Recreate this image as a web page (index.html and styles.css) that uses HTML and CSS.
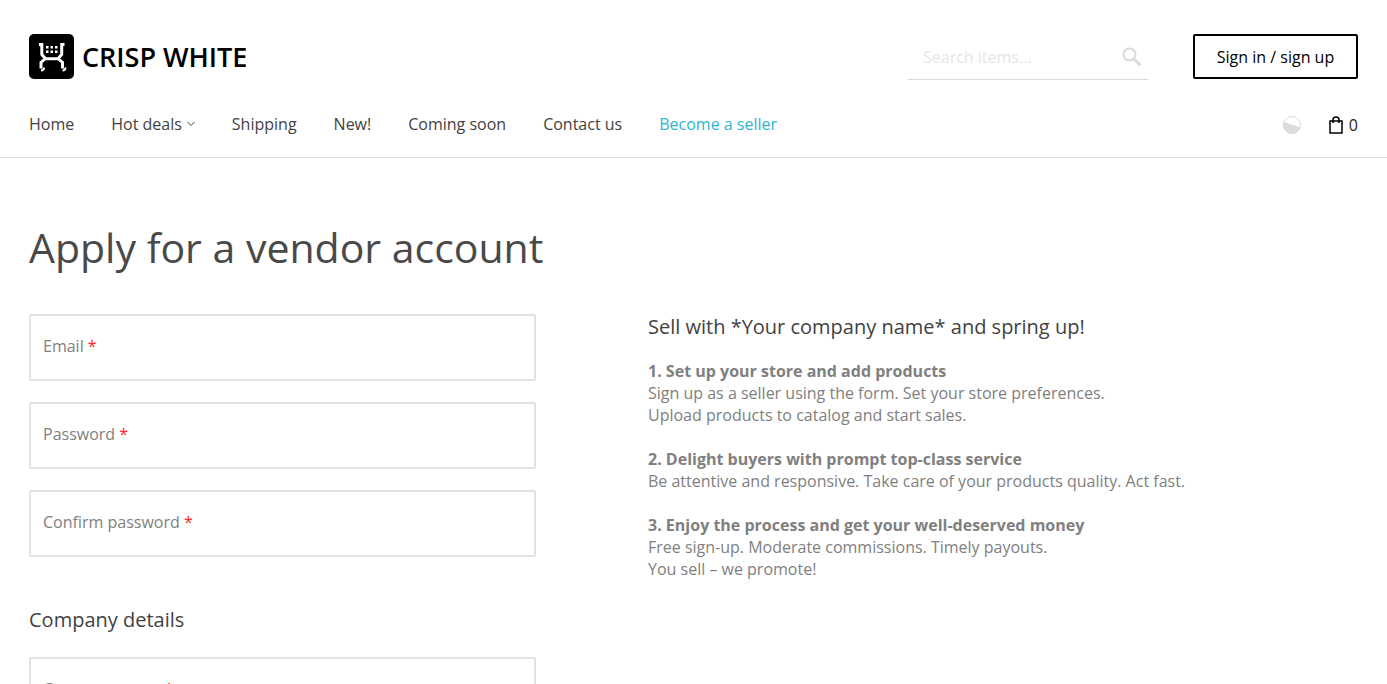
FILE: index.html
```html
<!DOCTYPE html>
<html lang="en">
<head>
<meta charset="utf-8">
<meta name="viewport" content="width=device-width, initial-scale=1">
<title>Apply for a vendor account</title>
<link rel="stylesheet" href="styles.css">
</head>
<body>
<header class="header">
  <div class="header-top">
    <a class="logo" href="#">
      <svg class="logo-mark" viewBox="0 0 45 45" aria-hidden="true">
        <rect width="45" height="45" rx="5"/>
        <path class="logo-frame" d="M10 10.500H12.800V20.500L16.500 24.800H29L32.700 20.500V10.500H35.500M16.500 24.500L12 28.500V34.500M29 24.500L33.500 28.500V34.500"/>
        <path class="logo-basket" d="M17 12h2.500v2.500H17zM21.500 12H24v2.500h-2.500zM26 12h2.500v2.500H26zM17 16.500h2.500V19H17zM21.500 16.500H24V19h-2.500zM26 16.500h2.500V19H26z"/>
        <path class="logo-wheel" d="M12 36.500q3 0 3-3M33.500 36.500q3 0 3-3"/>
      </svg>
      <span>CRISP WHITE</span>
    </a>
    <form class="search">
      <input class="search-input" type="search" placeholder="Search items..." aria-label="Search items">
      <button class="search-button" type="button" aria-label="Search">
        <svg class="search-icon" viewBox="0 0 20 20" aria-hidden="true"><circle cx="7.500" cy="7.500" r="5.900"/><path d="M11.800 11.800l6.500 6.500"/></svg>
      </button>
    </form>
    <button class="sign-in" type="button">Sign in / sign up</button>
  </div>
  <div class="header-bottom">
    <nav class="nav">
      <a href="#">Home</a>
      <a class="has-menu" href="#">Hot deals
        <svg class="chevron" viewBox="0 0 8 6" aria-hidden="true"><path d="M.5 1L4 4.500 7.500 1"/></svg>
      </a>
      <a href="#">Shipping</a>
      <a href="#">New!</a>
      <a href="#">Coming soon</a>
      <a href="#">Contact us</a>
      <a class="active" href="#">Become a seller</a>
    </nav>
    <div class="tools">
      <a href="#" class="compare" aria-label="Compare">
        <svg class="compare-icon" viewBox="0 0 20 20" aria-hidden="true"><circle cx="10" cy="10" r="8.500"/><path d="M1.300 6.800L18.700 12.600A9 9 0 1 1 1.300 6.800z"/></svg>
      </a>
      <a href="#" class="cart">
        <svg class="bag-icon" viewBox="0 0 14 18" aria-hidden="true"><path d="M1 5h12v12H1zM4 7V4a3 3 0 0 1 6 0v3"/></svg>
        <span>0</span>
      </a>
    </div>
  </div>
</header>
<main class="main">
  <h1 class="title">Apply for a vendor account</h1>
  <div class="columns">
    <form class="form">
      <div class="fields">
        <div class="field"><label for="email">Email <span class="required">*</span></label><input id="email" type="email" required></div>
        <div class="field"><label for="password">Password <span class="required">*</span></label><input id="password" type="password" required></div>
        <div class="field"><label for="confirm">Confirm password <span class="required">*</span></label><input id="confirm" type="password" required></div>
      </div>
      <h2 class="subtitle form-subtitle">Company details</h2>
      <div class="fields">
        <div class="field"><label for="company">Company name <span class="required">*</span></label><input id="company" type="text" required></div>
      </div>
    </form>
    <section class="promo">
      <h2 class="subtitle">Sell with *Your company name* and spring up!</h2>
      <p><strong>1. Set up your store and add products</strong><br>Sign up as a seller using the form. Set your store preferences.<br>Upload products to catalog and start sales.</p>
      <p><strong>2. Delight buyers with prompt top-class service</strong><br>Be attentive and responsive. Take care of your products quality. Act fast.</p>
      <p><strong>3. Enjoy the process and get your well-deserved money</strong><br>Free sign-up. Moderate commissions. Timely payouts.<br>You sell – we promote!</p>
    </section>
  </div>
</main>
</body>
</html>
```
FILE: styles.css
```css
* { box-sizing: border-box; }
html { overflow: hidden; }
body {
  margin: 0;
  background: #fff;
  color: #808080;
  font: 16px/22px "Open Sans", sans-serif;
}
a { color: inherit; text-decoration: none; }
button, input { font: inherit; }
svg { display: block; fill: none; }

.header { border-bottom: 1px solid #dfdfdf; padding: 34px 29px 21px; }
.header-top { display: flex; align-items: flex-start; }
.logo {
  display: flex;
  align-items: center;
  gap: 8px;
  margin-right: auto;
  color: #000;
  font-size: 27px;
  font-weight: 600;
}
.logo-mark { width: 45px; height: 45px; }
.logo-mark rect { fill: #000; }
.logo-frame { stroke: #fff; stroke-width: 3; }
.logo-basket { fill: #fff; }
.logo-wheel { stroke: #fff; stroke-width: 2; }

.search {
  display: flex;
  align-items: center;
  width: 240px;
  height: 46px;
  margin-right: 45px;
  border-bottom: 1px solid #d9d9d9;
}
.search-input {
  flex: 1;
  min-width: 0;
  padding: 0 15px;
  border: 0;
  outline: 0;
  background: none;
}
.search-input::placeholder { color: #e6e6e6; }
.search-button { padding: 0 6px; border: 0; background: none; }
.search-icon { width: 20px; height: 20px; stroke: #d9d9d9; stroke-width: 2; }
.search-icon path { stroke-width: 3; }
.sign-in {
  width: 165px;
  height: 45px;
  padding: 0;
  border: 2px solid #000;
  border-radius: 2px;
  background: #fff;
  color: #000;
}

.header-bottom { display: flex; align-items: flex-start; justify-content: space-between; margin-top: 33px; color: #424242; }
.nav { display: flex; gap: 37px; }
.active { color: #2fb5d2; }
.has-menu { display: flex; align-items: center; gap: 5px; }
.chevron { width: 8px; height: 6px; stroke: #424242; }
.tools { display: flex; align-items: center; gap: 27px; padding-top: 1px; }
.compare-icon { width: 20px; height: 20px; }
.compare-icon circle { stroke: #dcdcdc; }
.compare-icon path { fill: #dcdcdc; }
.cart { display: flex; align-items: center; gap: 6px; color: #222; }
.bag-icon { width: 14px; height: 18px; stroke: #000; stroke-width: 1.5; }

.main { padding: 62px 29px; }
.title { margin: 0 0 39px; color: #494949; font-size: 41px; font-weight: 400; line-height: 55px; }
.columns { display: grid; grid-template-columns: 507px 1fr; column-gap: 112px; }
.fields { display: grid; gap: 21px; }
.field {
  display: flex;
  align-items: center;
  height: 67px;
  padding: 0 12px 4px;
  border: 2px solid #e2e2e2;
  border-radius: 2px;
}
.field input { flex: 1; min-width: 0; border: 0; outline: 0; background: none; }
.required { color: #f22; }
.subtitle { margin: 0; color: #424242; font-size: 20px; font-weight: 400; line-height: 26px; }
.form-subtitle { margin: 50px 0 24px; }
.promo p { margin: 20px 0 22px; }
.promo p + p { margin: 22px 0; }
```
